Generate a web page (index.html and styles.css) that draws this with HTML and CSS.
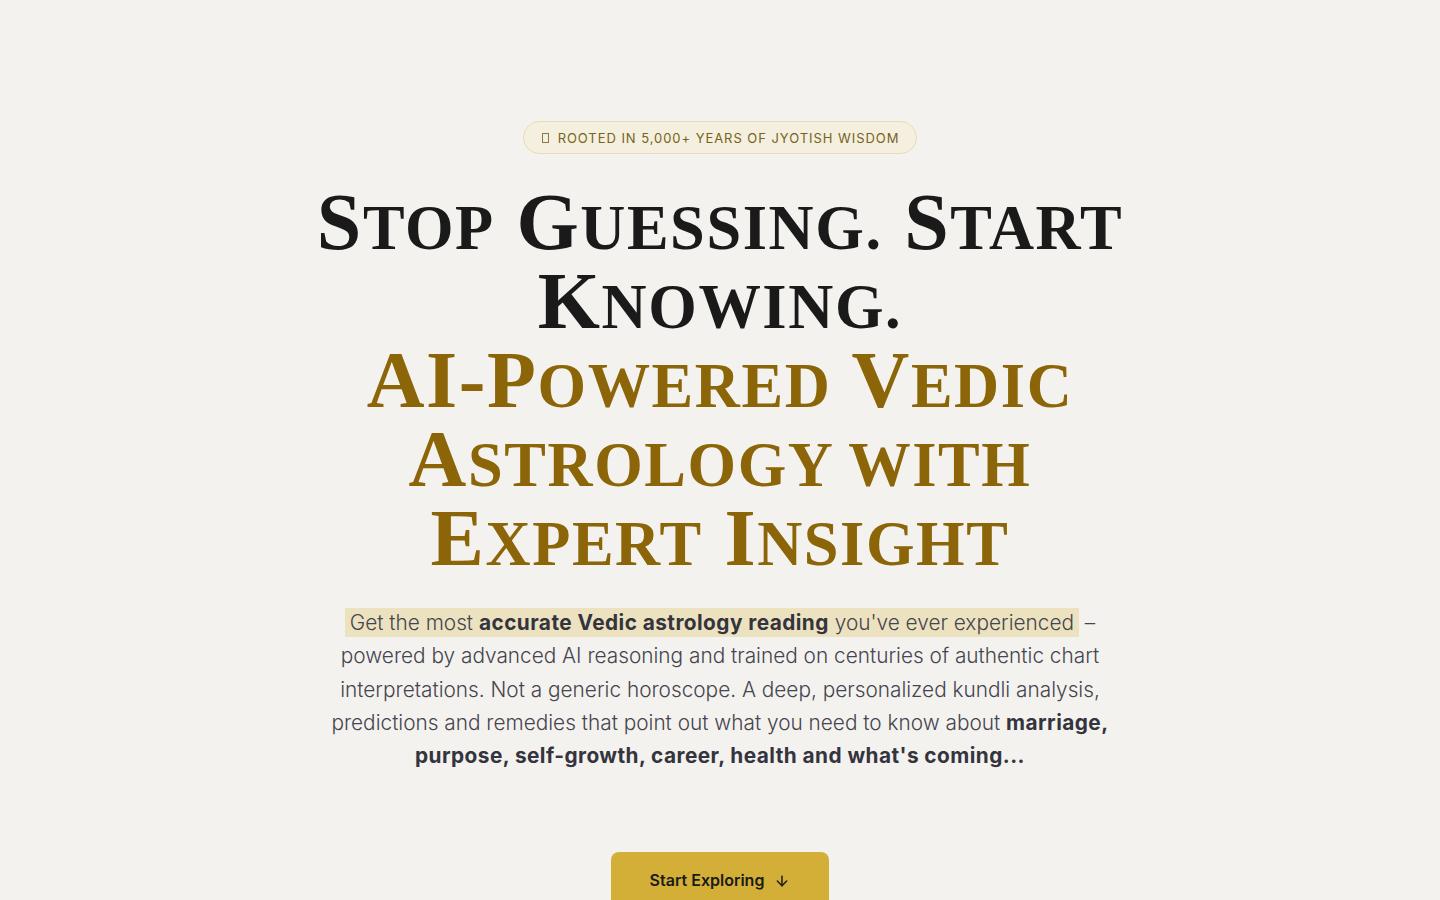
FILE: index.html
```html
<!DOCTYPE html>
<html lang="en">
<head>
<meta charset="utf-8">
<title>AI-Powered Vedic Astrology</title>
<link rel="stylesheet" href="styles.css">
</head>
<body>
<main class="hero">
  <div class="badge"><span class="badge-icon"></span><span class="badge-text">Rooted in 5,000+ years of Jyotish wisdom</span></div>
  <h1 class="title">S<span class="sc">top</span> G<span class="sc">uessing.</span> S<span class="sc">tart</span> K<span class="sc">nowing.</span><br><span class="gold">AI-P<span class="sc">owered</span> V<span class="sc">edic</span> A<span class="sc">strology with</span> E<span class="sc">xpert</span> I<span class="sc">nsight</span></span></h1>
  <p class="lead"><span class="hl">Get the most <strong>accurate Vedic astrology reading</strong> you've ever experienced</span> – powered by advanced AI reasoning and trained on centuries of authentic chart interpretations. Not a generic horoscope. A deep, personalized kundli analysis, predictions and remedies that point out what you need to know about <strong>marriage, purpose, self-growth, career, health and what's coming...</strong></p>
  <a class="cta" href="#">Start Exploring
    <svg width="16" height="16" viewBox="0 0 24 24" fill="none" stroke="currentColor" stroke-width="2.2" stroke-linecap="round" stroke-linejoin="round"><path d="M12 5v14"/><path d="M19 12l-7 7-7-7"/></svg>
  </a>
</main>
</body>
</html>
```

FILE: styles.css
```css
html, body {
  margin: 0;
  padding: 0;
  background: #f4f2ee;
}
body {
  font-family: Inter, "Liberation Sans", sans-serif;
  color: #3f3f48;
  height: 900px;
  overflow: hidden;
}
.hero {
  display: flex;
  flex-direction: column;
  align-items: center;
  padding-top: 121px;
}
.badge {
  display: flex;
  align-items: center;
  gap: 9px;
  height: 31px;
  padding: 0 17px 0 18px;
  border: 1px solid #e6dcb4;
  border-radius: 999px;
  background: #f4efdf;
  box-sizing: content-box;
}
.badge-icon {
  width: 7px;
  height: 10px;
  border: 1px solid #8a7a40;
  box-sizing: border-box;
}
.badge-text {
  font-size: 13px;
  font-weight: 400;
  letter-spacing: 0.95px;
  text-transform: uppercase;
  color: #76641a;
}
.title {
  margin: 29px 0 0;
  font-family: "Liberation Serif", "Times New Roman", serif;
  font-weight: 700;
  font-size: 80px;
  line-height: 79px;
  letter-spacing: 1.6px;
  text-align: center;
  color: #1a1a1a;
  max-width: 900px;
}
.sc {
  font-size: 0.78em;
  line-height: 1;
  text-transform: uppercase;
}
.gold {
  color: #8b6508;
}
.lead {
  margin: 28px 0 0;
  max-width: 790px;
  font-size: 20.8px;
  line-height: 33.3px;
  font-weight: 300;
  text-align: center;
  color: #45454f;
}
.lead strong {
  font-weight: 700;
  letter-spacing: 0.45px;
  color: #34343e;
}
.hl {
  background: #ece2c0;
  padding: 2px 5px;
}
.cta {
  margin-top: 80px;
  display: flex;
  align-items: center;
  gap: 10px;
  height: 56px;
  padding: 0 39px;
  border-radius: 8px;
  background: #d4af37;
  color: #1a1a1a;
  font-size: 16px;
  font-weight: 600;
  text-decoration: none;
}
.cta svg {
  margin-top: 1px;
}
```
